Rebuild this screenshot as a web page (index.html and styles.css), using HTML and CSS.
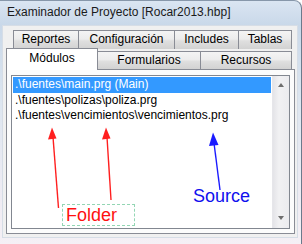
FILE: index.html
```html
<!DOCTYPE html>
<html>
<head>
<meta charset="utf-8">
<link rel="stylesheet" href="styles.css">
</head>
<body>
<div class="window">
  <div class="titlebar">Examinador de Proyecto [Rocar2013.hbp]</div>
  <div class="client">
    <div class="tabctl">
      <div class="tabrow row1">
        <div class="tab t-rep">Reportes</div>
        <div class="tab t-conf">Configuración</div>
        <div class="tab t-inc">Includes</div>
        <div class="tab t-tab">Tablas</div>
      </div>
      <div class="tabrow row2">
        <div class="tab t-mod selected">Módulos</div>
        <div class="tab t-form">Formularios</div>
        <div class="tab t-rec">Recursos</div>
      </div>
      <div class="panel">
        <div class="listbox">
          <div class="items">
            <div class="item sel">.\fuentes\main.prg (Main)</div>
            <div class="item">.\fuentes\polizas\poliza.prg</div>
            <div class="item">.\fuentes\vencimientos\vencimientos.prg</div>
          </div>
          <div class="scrollbar">
            <span class="arrow up"></span>
            <span class="arrow down"></span>
          </div>
        </div>
      </div>
    </div>
  </div>
  <svg class="annot" width="302" height="244" viewBox="0 0 302 244">
    <g stroke="#ff1f1f" stroke-width="1.4" fill="none">
      <line x1="53" y1="136" x2="58.5" y2="207"/>
      <line x1="107" y1="136" x2="111" y2="199"/>
    </g>
    <g fill="#ff1f1f">
      <polygon points="52,126.5 48,138.5 56.5,137.5"/>
      <polygon points="106,126.5 102,138.5 110.5,137.5"/>
    </g>
    <line x1="214" y1="142" x2="220" y2="189" stroke="#1a1aff" stroke-width="1.4"/>
    <polygon points="213,131.5 209,145 218.5,144" fill="#1a1aff"/>
  </svg>
  <div class="label folder">Folder</div>
  <div class="label source">Source</div>
</div>
</body>
</html>
```
FILE: styles.css
```css
html, body {
  margin: 0;
  padding: 0;
  background: #ffffff;
}
.window {
  position: relative;
  width: 302px;
  height: 244px;
  box-sizing: border-box;
  border-right: 1px solid #6b7a8c;
  border-top: 1px solid #8797aa;
  border-radius: 0 8px 0 0;
  background: linear-gradient(to bottom, #dae5f2 0px, #c9d8e9 24px, #dde6f0 100px, #efecf3 200px, #f5f0f5 244px);
  padding: 0 3px 6px 2px;
  display: flex;
  flex-direction: column;
  font-family: "Liberation Sans", Arial, sans-serif;
  font-size: 12px;
  color: #000;
  overflow: hidden;
}
.titlebar {
  height: 24px;
  line-height: 16px;
  padding: 3px 0 0 5px;
  box-sizing: border-box;
  font-size: 12px;
  color: #1a1a1a;
  white-space: nowrap;
}
.client {
  flex: 1;
  background: #f0f0f0;
  border: 1px solid #d6dde6;
  box-sizing: border-box;
  padding: 4px 0 0 3px;
}
.tabctl {
  display: flex;
  flex-direction: column;
  width: 289px;
}
.tabrow {
  display: flex;
  align-items: flex-end;
}
.row1 {
  height: 19px;
  padding-left: 7px;
}
.row2 {
  height: 18px;
  margin-top: 2px;
}
.tab {
  box-sizing: border-box;
  height: 100%;
  border: 1px solid #898c95;
  border-bottom: none;
  background: linear-gradient(to bottom, #f4f4f4 0%, #ececec 45%, #dfdfdf 55%, #d2d2d2 100%);
  text-align: center;
  line-height: 17px;
  white-space: nowrap;
  margin-left: -1px;
}
.tab:first-child { margin-left: 0; }
.t-rep { width: 66px; }
.t-conf { width: 97px; }
.t-inc { width: 65px; }
.t-tab { width: 54px; }
.t-mod { width: 92px; }
.t-form { width: 104px; }
.t-rec { width: 92px; }
.tab.selected {
  height: 22px;
  margin-bottom: -1px;
  position: relative;
  z-index: 2;
  background: #ffffff;
  line-height: 18px;
}
.panel {
  height: 165px;
  box-sizing: border-box;
  border: 1px solid #898c95;
  background: #fcfcfc;
  padding: 5px 4px 4px 4px;
}
.listbox {
  height: 100%;
  box-sizing: border-box;
  border: 1px solid #828790;
  background: #ffffff;
  display: flex;
}
.items {
  flex: 1;
  padding: 1px 1px;
}
.item {
  height: 15.5px;
  line-height: 15px;
  padding-left: 2px;
  white-space: nowrap;
  color: #000;
}
.item.sel {
  background: #3399ff;
  color: #ffffff;
}
.scrollbar {
  width: 17px;
  box-sizing: border-box;
  border-left: 1px solid #e6e6ea;
  border-right: 1px solid #ebebee;
  background: linear-gradient(to right, #e4e4e8 0%, #f1f1f3 40%, #ececef 100%);
  display: flex;
  flex-direction: column;
  justify-content: space-between;
  align-items: center;
  padding: 7px 0 8px 0;
}
.arrow {
  width: 0;
  height: 0;
  border-left: 3.5px solid transparent;
  border-right: 3.5px solid transparent;
}
.arrow.up { border-bottom: 4px solid #6e6e6e; }
.arrow.down { border-top: 4px solid #6e6e6e; }
.annot {
  position: absolute;
  left: 0;
  top: 0;
}
.label {
  position: absolute;
  font-family: "Liberation Sans", Arial, sans-serif;
  font-size: 18px;
  line-height: 20px;
  white-space: nowrap;
}
.folder {
  left: 62px;
  top: 203px;
  width: 73px;
  height: 22px;
  box-sizing: border-box;
  border: 1px dashed #93d6b4;
  color: #ff1010;
  padding-left: 3px;
  line-height: 21px;
}
.source {
  left: 193px;
  top: 185px;
  color: #1010ee;
}
```
